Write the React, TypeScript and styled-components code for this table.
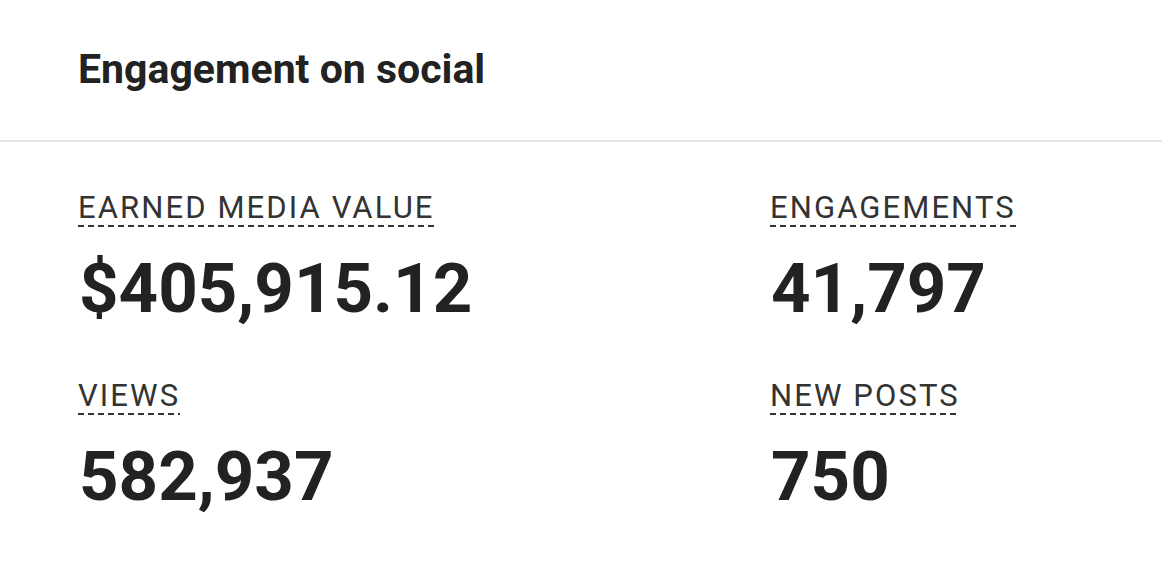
import styled, { createGlobalStyle } from 'styled-components'

const GlobalStyle = createGlobalStyle`
  body {
    margin: 0;
    background: #fff;
    font-family: Roboto, 'Liberation Sans', sans-serif;
    color: #222;
  }
`

const stats = [
  { label: 'EARNED MEDIA VALUE', value: '$405,915.12' },
  { label: 'ENGAGEMENTS', value: '41,797' },
  { label: 'VIEWS', value: '582,937' },
  { label: 'NEW POSTS', value: '750' },
]

const App = () => {
  return (
    <Card>
      <GlobalStyle />
      <Header>
        <Title>Engagement on social</Title>
      </Header>
      <Grid>
        {stats.map(stat => (
          <Stat key={stat.label}>
            <Label>{stat.label}</Label>
            <Value>{stat.value}</Value>
          </Stat>
        ))}
      </Grid>
    </Card>
  )
}

const Card = styled.div`
  display: flex;
  flex-direction: column;
  width: 100%;
  min-height: 587px;
  background: #fff;
`

const Header = styled.div`
  padding: 49px 0 51px 78px;
  border-bottom: 2px solid #e4e4e4;
`

const Title = styled.h2`
  margin: 0;
  font-size: 41px;
  line-height: 40px;
  font-weight: 700;
  color: #222;
`

const Grid = styled.div`
  display: grid;
  grid-template-columns: 692px 1fr;
  row-gap: 55px;
  padding: 48px 0 0 78px;
`

const Stat = styled.div`
  display: flex;
  flex-direction: column;
  align-items: flex-start;
`

const Label = styled.span`
  font-size: 31px;
  line-height: 35px;
  font-weight: 400;
  letter-spacing: 2.1px;
  color: #333;
  padding-bottom: 2px;
  background-image: linear-gradient(to right, #333 60%, transparent 60%);
  background-size: 10px 2px;
  background-repeat: repeat-x;
  background-position: left bottom;
`

const Value = styled.span`
  margin-top: 27px;
  margin-left: 1px;
  font-size: 69px;
  line-height: 69px;
  font-weight: 700;
  color: #222;
`

export default App
